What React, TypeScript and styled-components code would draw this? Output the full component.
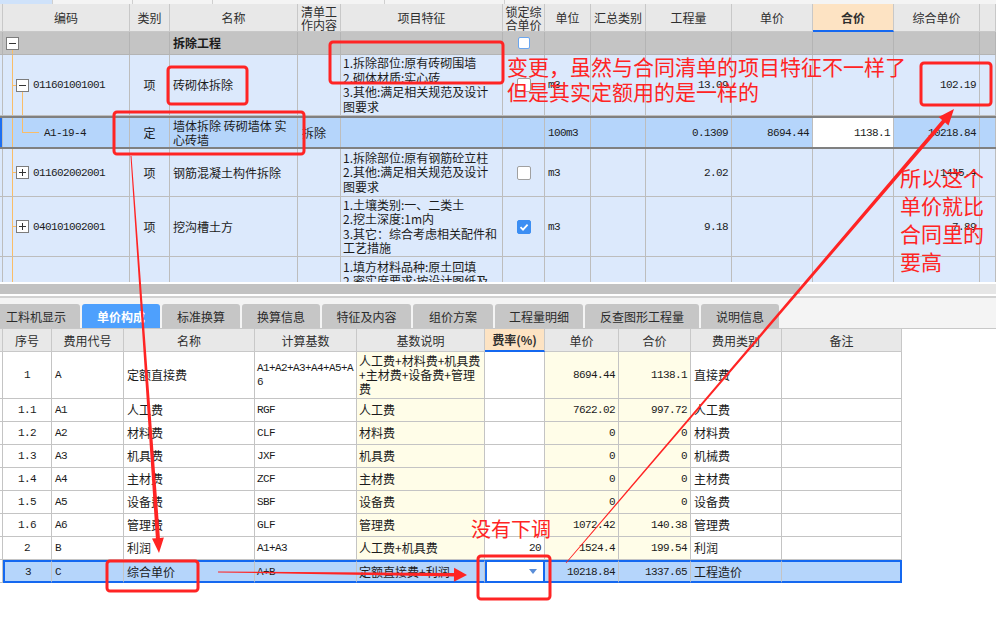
import React from 'react';
import styled, { createGlobalStyle, css } from 'styled-components';

const CN = `'Noto Sans CJK SC', 'Liberation Sans', sans-serif`;
const MONO = `'Liberation Mono', 'Noto Sans CJK SC', monospace`;
const RED = '#ff2424';
const ORANGE = '#f9bd68';
const ROW_BG = '#dce9fc';
const SEL_ROW = '#b5d5fb';
const SEL_BLUE = '#1468f0';
const YELLOW = '#fffde8';

const TOP_COLS = '3px 127px 40px 128px 43px 162px 42px 46px 55px 86px 81px 81px 86px 16px';
const LOW_COLS = '3px 49px 72px 131px 102px 128px 60px 74px 72px 91px 120px';

type Align = 'left' | 'center' | 'right';
const JUSTIFY: Record<Align, string> = { left: 'flex-start', center: 'center', right: 'flex-end' };

const GlobalStyle = createGlobalStyle`
  html, body { margin: 0; padding: 0; background: #ffffff; }
  body { font-family: ${CN}; font-size: 12px; color: #1b1b1b; }
  * { box-sizing: border-box; }
`;

const Page = styled.div`
  position: relative;
  width: 996px;
  height: 627px;
  overflow: hidden;
  background: #fff;
`;

const TopPane = styled.div`
  height: 282px;
  overflow: hidden;
  background: ${ROW_BG};
`;

const TopStrip = styled.div`
  display: flex;
  height: 4px;
  background: #f4f4f4;
`;

const StripCell = styled.div<{ $w: number; $bg?: string }>`
  width: ${p => p.$w}px;
  background: ${p => p.$bg ?? '#f4f4f4'};
  border-right: 1px solid #cfcfcf;
`;

const Row = styled.div<{ $cols: string; $h: number; $bg?: string; $sel?: boolean }>`
  display: grid;
  grid-template-columns: ${p => p.$cols};
  height: ${p => p.$h}px;
  background: ${p => p.$bg ?? 'transparent'};
  ${p =>
    p.$sel &&
    css`
      border-top: 2px solid #808080;
      border-bottom: 2px solid #808080;
      & > div {
        border-bottom: none;
      }
    `}
`;

const Cell = styled.div<{
  $align?: Align;
  $mono?: boolean;
  $bg?: string;
  $line?: string;
  $wrap?: boolean;
  $pad?: number;
  $bold?: boolean;
  $sel?: boolean;
  $edgeL?: boolean;
  $edgeR?: boolean;
}>`
  min-width: 0;
  display: flex;
  align-items: center;
  justify-content: ${p => JUSTIFY[p.$align ?? 'left']};
  padding: 0 ${p => p.$pad ?? 3}px;
  background: ${p => p.$bg ?? 'transparent'};
  border-right: 1px solid ${p => p.$line ?? '#bdbdbd'};
  border-bottom: 1px solid ${p => p.$line ?? '#bdbdbd'};
  overflow: hidden;
  white-space: ${p => (p.$wrap ? 'pre-line' : 'nowrap')};
  word-break: break-all;
  font-family: ${p => (p.$mono ? MONO : CN)};
  font-size: ${p => (p.$mono ? 11 : 12)}px;
  letter-spacing: ${p => (p.$mono ? '-0.6px' : 'normal')};
  font-weight: ${p => (p.$bold ? 700 : 400)};
  line-height: 14px;
  color: #1b1b1b;
  ${p =>
    p.$sel &&
    css`
      border-top: 2px solid ${SEL_BLUE};
      border-bottom: 2px solid ${SEL_BLUE};
    `}
  ${p => p.$edgeL && css`border-left: 2px solid ${SEL_BLUE};`}
  ${p => p.$edgeR && css`border-right: 2px solid ${SEL_BLUE};`}
`;

const HeadCell = styled(Cell)<{ $hot?: boolean }>`
  justify-content: center;
  text-align: center;
  line-height: 13px;
  color: #2e2e2e;
  background: ${p => (p.$hot ? '#fde3c3' : '#e8e8e8')};
  border-right-color: #c8c8c8;
  border-bottom: ${p => (p.$hot ? `2px solid ${SEL_BLUE}` : '1px solid #c8c8c8')};
  font-weight: ${p => (p.$hot ? 700 : 400)};
`;

const Features = styled.div`
  font-size: 12px;
  line-height: 14.5px;
  white-space: pre-line;
`;

const CodeText = styled.span`
  font-family: ${MONO};
`;

const Box = styled.span<{ $variant: 'blue' | 'plain' | 'checked' }>`
  display: inline-flex;
  align-items: center;
  justify-content: center;
  width: ${p => (p.$variant === 'blue' ? 12 : 14)}px;
  height: ${p => (p.$variant === 'blue' ? 12 : 14)}px;
  border-radius: 2px;
  border: 1px solid
    ${p => (p.$variant === 'blue' ? '#6aa6f0' : p.$variant === 'checked' ? '#3c8ef3' : '#a0a0a0')};
  background: ${p => (p.$variant === 'checked' ? '#3c8ef3' : '#fff')};
`;

const ScrollArea = styled.div`
  height: 14px;
  padding: 2px 0;
  background: #fff;
`;

const ScrollTrack = styled.div`
  display: flex;
  height: 10px;
  background: #e6e6e6;
`;

const ScrollThumb = styled.div`
  width: 800px;
  background: #c2c2c2;
`;

const Divider = styled.div`
  height: 2px;
  background: #d2d2d2;
`;

const TabBar = styled.div`
  display: flex;
  gap: 2px;
  height: 31px;
  padding-top: 6px;
  background: #f4f4f4;
  border-bottom: 1px solid #c8c8c8;
`;

const Tab = styled.div<{ $w: number; $active?: boolean; $shift?: number }>`
  flex: none;
  width: ${p => p.$w}px;
  margin-left: ${p => p.$shift ?? 0}px;
  display: flex;
  align-items: center;
  justify-content: center;
  border-radius: 3px 3px 0 0;
  background: ${p => (p.$active ? '#4ea0fd' : '#c6c6c6')};
  color: ${p => (p.$active ? '#fff' : '#2b2b2b')};
  font-weight: ${p => (p.$active ? 700 : 400)};
  font-size: 12px;
`;

const Caret = styled.span`
  width: 0;
  height: 0;
  border-left: 4px solid transparent;
  border-right: 4px solid transparent;
  border-top: 5px solid #5a8ed8;
  margin-right: 3px;
`;

const Overlay = styled.svg`
  position: absolute;
  left: 0;
  top: 0;
  pointer-events: none;
`;

const Note = styled.div<{ $x: number; $y: number; $size: number; $lh: number }>`
  position: absolute;
  left: ${p => p.$x}px;
  top: ${p => p.$y}px;
  font-family: ${CN};
  font-size: ${p => p.$size}px;
  line-height: ${p => p.$lh}px;
  color: ${RED};
  white-space: pre;
  pointer-events: none;
`;

type TreeKind = 'group' | 'open' | 'child' | 'closed' | 'none';

function ExpandBox({ x, cy, plus }: { x: number; cy: number; plus?: boolean }) {
  return (
    <g>
      <rect x={x + 0.5} y={cy - 5.5} width={12} height={12} fill="#fff" stroke="#7c7c7c" />
      <line x1={x + 3} y1={cy + 0.5} x2={x + 10} y2={cy + 0.5} stroke="#333" />
      {plus && <line x1={x + 6.5} y1={cy - 3} x2={x + 6.5} y2={cy + 4} stroke="#333" />}
    </g>
  );
}

function Tree({ kind, h }: { kind: TreeKind; h: number }) {
  const cy = Math.floor(h / 2);
  const w = kind === 'child' ? 41 : 30;
  return (
    <svg width={w} height={h} style={{ flex: 'none' }}>
      {kind === 'group' ? (
        <line x1={9.5} y1={cy + 7} x2={9.5} y2={h} stroke={ORANGE} />
      ) : (
        <line x1={9.5} y1={0} x2={9.5} y2={h} stroke={ORANGE} />
      )}
      {kind === 'group' && <ExpandBox x={3} cy={cy} />}
      {(kind === 'open' || kind === 'closed') && (
        <line x1={9.5} y1={cy + 0.5} x2={13} y2={cy + 0.5} stroke={ORANGE} />
      )}
      {kind === 'open' && (
        <>
          <line x1={19.5} y1={cy + 7} x2={19.5} y2={h} stroke={ORANGE} />
          <ExpandBox x={13} cy={cy} />
        </>
      )}
      {kind === 'closed' && <ExpandBox x={13} cy={cy} plus />}
      {kind === 'child' && (
        <>
          <line x1={19.5} y1={0} x2={19.5} y2={cy + 1} stroke={ORANGE} />
          <line x1={19.5} y1={cy + 0.5} x2={36} y2={cy + 0.5} stroke={ORANGE} />
        </>
      )}
    </svg>
  );
}

function Check({ variant }: { variant: 'blue' | 'plain' | 'checked' }) {
  return (
    <Box $variant={variant}>
      {variant === 'checked' && (
        <svg width="10" height="10" viewBox="0 0 10 10">
          <polyline points="1.5,5.2 4,7.6 8.6,2.6" fill="none" stroke="#fff" strokeWidth="1.8" />
        </svg>
      )}
    </Box>
  );
}

interface TopRowData {
  tree: TreeKind;
  h: number;
  sel?: boolean;
  code: string;
  type: string;
  name: string;
  work?: string;
  feat: string[];
  check?: 'plain' | 'checked';
  unit: string;
  qty: string;
  price?: string;
  total?: string;
  unitPrice: string;
}

const topRows: TopRowData[] = [
  {
    tree: 'open', h: 61, code: '011601001001', type: '项', name: '砖砌体拆除',
    feat: ['1.拆除部位:原有砖砌围墙', '2.砌体材质:实心砖', '3.其他:满足相关规范及设计', '图要求'],
    check: 'plain', unit: 'm3', qty: '13.09', unitPrice: '102.19',
  },
  {
    tree: 'child', h: 33, sel: true, code: 'A1-19-4', type: '定', name: '墙体拆除 砖砌墙体 实\n心砖墙',
    work: '拆除', feat: [], unit: '100m3', qty: '0.1309', price: '8694.44', total: '1138.1', unitPrice: '10218.84',
  },
  {
    tree: 'closed', h: 48, code: '011602002001', type: '项', name: '钢筋混凝土构件拆除',
    feat: ['1.拆除部位:原有钢筋砼立柱', '2.其他:满足相关规范及设计', '图要求'],
    check: 'plain', unit: 'm3', qty: '2.02', unitPrice: '1445.4',
  },
  {
    tree: 'closed', h: 60, code: '040101002001', type: '项', name: '挖沟槽土方',
    feat: ['1.土壤类别:一、二类土', '2.挖土深度:1m内', '3.其它：综合考虑相关配件和', '工艺措施'],
    check: 'checked', unit: 'm3', qty: '9.18', unitPrice: '7.89',
  },
  {
    tree: 'none', h: 64, code: '', type: '', name: '',
    feat: ['1.填方材料品种:原土回填', '2.密实度要求:按设计图纸及', '规范要求', '3.其他:满足相关规范'],
    unit: '', qty: '', unitPrice: '',
  },
];

interface LowRowData {
  no: string;
  code: string;
  name: string;
  base: string;
  desc: string;
  rate?: string;
  price: string;
  total: string;
  kind: string;
  h?: number;
  sel?: boolean;
}

const lowRows: LowRowData[] = [
  { h: 47, no: '1', code: 'A', name: '定额直接费', base: 'A1+A2+A3+A4+A5+A6', desc: '人工费+材料费+机具费+主材费+设备费+管理费', price: '8694.44', total: '1138.1', kind: '直接费' },
  { no: '1.1', code: 'A1', name: '人工费', base: 'RGF', desc: '人工费', price: '7622.02', total: '997.72', kind: '人工费' },
  { no: '1.2', code: 'A2', name: '材料费', base: 'CLF', desc: '材料费', price: '0', total: '0', kind: '材料费' },
  { no: '1.3', code: 'A3', name: '机具费', base: 'JXF', desc: '机具费', price: '0', total: '0', kind: '机械费' },
  { no: '1.4', code: 'A4', name: '主材费', base: 'ZCF', desc: '主材费', price: '0', total: '0', kind: '主材费' },
  { no: '1.5', code: 'A5', name: '设备费', base: 'SBF', desc: '设备费', price: '0', total: '0', kind: '设备费' },
  { no: '1.6', code: 'A6', name: '管理费', base: 'GLF', desc: '管理费', price: '1072.42', total: '140.38', kind: '管理费' },
  { no: '2', code: 'B', name: '利润', base: 'A1+A3', desc: '人工费+机具费', rate: '20', price: '1524.4', total: '199.54', kind: '利润' },
  { no: '3', code: 'C', name: '综合单价', base: 'A+B', desc: '定额直接费+利润', price: '10218.84', total: '1337.65', kind: '工程造价', sel: true },
];

const tabs: [string, number][] = [
  ['工料机显示', 88],
  ['单价构成', 78],
  ['标准换算', 78],
  ['换算信息', 78],
  ['特征及内容', 89],
  ['组价方案', 80],
  ['工程量明细', 88],
  ['反查图形工程量', 114],
  ['说明信息', 78],
];

function arrow(x0: number, y0: number, x1: number, y1: number, w0: number, w1: number, hl: number, hw: number) {
  const dx = x1 - x0;
  const dy = y1 - y0;
  const len = Math.hypot(dx, dy);
  const ux = dx / len;
  const uy = dy / len;
  const nx = -uy;
  const ny = ux;
  const bx = x1 - ux * hl;
  const by = y1 - uy * hl;
  const pts = [
    [x0 + (nx * w0) / 2, y0 + (ny * w0) / 2],
    [bx + (nx * w1) / 2, by + (ny * w1) / 2],
    [bx + (nx * hw) / 2, by + (ny * hw) / 2],
    [x1, y1],
    [bx - (nx * hw) / 2, by - (ny * hw) / 2],
    [bx - (nx * w1) / 2, by - (ny * w1) / 2],
    [x0 - (nx * w0) / 2, y0 - (ny * w0) / 2],
  ];
  return pts.map(p => `${p[0].toFixed(1)},${p[1].toFixed(1)}`).join(' ');
}

const marks = [
  { x: 168, y: 67, w: 79, h: 37 },
  { x: 330, y: 42, w: 173, h: 41 },
  { x: 114, y: 112, w: 190, h: 42 },
  { x: 921, y: 63, w: 70, h: 42 },
  { x: 107, y: 561, w: 91, h: 30 },
  { x: 478, y: 556, w: 72, h: 43 },
];

function TopRowView({ r }: { r: TopRowData }) {
  const inner = r.sel ? r.h - 4 : r.h - 1;
  return (
    <Row $cols={TOP_COLS} $h={r.h} $bg={r.sel ? SEL_ROW : ROW_BG} $sel={r.sel}>
      <Cell $pad={0} $bg={r.sel ? '#1e6ff0' : undefined} />
      <Cell $pad={0} $mono>
        <Tree kind={r.tree} h={inner} />
        <CodeText>{r.code}</CodeText>
      </Cell>
      <Cell $align="center">{r.type}</Cell>
      <Cell $wrap>{r.name}</Cell>
      <Cell $pad={4}>{r.work}</Cell>
      <Cell $pad={2}>
        <Features>{r.feat.join('\n')}</Features>
      </Cell>
      <Cell $align="center">{r.check && <Check variant={r.check} />}</Cell>
      <Cell $mono>{r.unit}</Cell>
      <Cell />
      <Cell $mono $align="right">{r.qty}</Cell>
      <Cell $mono $align="right">{r.price}</Cell>
      <Cell $mono $align="right" $bg={r.sel ? '#fff' : undefined}>{r.total}</Cell>
      <Cell $mono $align="right">{r.unitPrice}</Cell>
      <Cell />
    </Row>
  );
}

function LowRowView({ r }: { r: LowRowData }) {
  const sel = !!r.sel;
  const bg = (yellow: boolean) => (sel ? SEL_ROW : yellow ? YELLOW : '#fff');
  return (
    <Row $cols={LOW_COLS} $h={r.h ?? 23}>
      <Cell $pad={0} $bg="#fff" $line="#c4c4c4" />
      <Cell $align="center" $mono $sel={sel} $edgeL={sel} $bg={bg(false)} $line="#c4c4c4">{r.no}</Cell>
      <Cell $mono $sel={sel} $bg={bg(false)} $line="#c4c4c4">{r.code}</Cell>
      <Cell $sel={sel} $bg={bg(false)} $line="#c4c4c4">{r.name}</Cell>
      <Cell $mono $wrap $pad={2} $sel={sel} $bg={bg(false)} $line="#c4c4c4">{r.base}</Cell>
      <Cell $wrap $pad={2} $sel={sel} $bg={bg(true)} $line="#c4c4c4">{r.desc}</Cell>
      {sel ? (
        <Cell $align="right" $sel $edgeL $edgeR $bg="#fff" $line="#c4c4c4">
          <Caret />
        </Cell>
      ) : (
        <Cell $align="right" $mono $bg="#fff" $line="#c4c4c4">{r.rate}</Cell>
      )}
      <Cell $align="right" $mono $sel={sel} $bg={bg(true)} $line="#c4c4c4">{r.price}</Cell>
      <Cell $align="right" $mono $sel={sel} $bg={bg(true)} $line="#c4c4c4">{r.total}</Cell>
      <Cell $sel={sel} $bg={bg(false)} $line="#c4c4c4">{r.kind}</Cell>
      <Cell $sel={sel} $edgeR={sel} $bg={bg(false)} $line="#c4c4c4" />
    </Row>
  );
}

const topHeads = ['', '编码', '类别', '名称', '清单工\n作内容', '项目特征', '锁定综\n合单价', '单位', '汇总类别', '工程量', '单价', '合价', '综合单价', ''];
const lowHeads = ['', '序号', '费用代号', '名称', '计算基数', '基数说明', '费率(%)', '单价', '合价', '费用类别', '备注'];

export default function App() {
  return (
    <Page>
      <GlobalStyle />
      <TopPane>
        <TopStrip>
          <StripCell $w={53} $bg="#cfe2fa" />
          <StripCell $w={80} />
          <StripCell $w={80} />
          <StripCell $w={172} />
          <StripCell $w={120} />
        </TopStrip>
        <Row $cols={TOP_COLS} $h={28}>
          {topHeads.map((t, i) => (
            <HeadCell key={i} $wrap $pad={i === 0 ? 0 : 1} $hot={t === '合价'}>
              {t}
            </HeadCell>
          ))}
        </Row>
        <Row $cols={TOP_COLS} $h={23} $bg="#c4c4c4">
          <Cell $pad={0} $line="#b4b4b4" />
          <Cell $pad={0} $line="#b4b4b4">
            <Tree kind="group" h={22} />
          </Cell>
          <Cell $line="#b4b4b4" />
          <Cell $bold $line="#b4b4b4">拆除工程</Cell>
          <Cell $line="#b4b4b4" />
          <Cell $line="#b4b4b4" />
          <Cell $align="center" $line="#b4b4b4">
            <Check variant="blue" />
          </Cell>
          <Cell $line="#b4b4b4" />
          <Cell $line="#b4b4b4" />
          <Cell $line="#b4b4b4" />
          <Cell $line="#b4b4b4" />
          <Cell $line="#b4b4b4" />
          <Cell $line="#b4b4b4" />
          <Cell $line="#b4b4b4" />
        </Row>
        {topRows.map((r, i) => (
          <TopRowView key={i} r={r} />
        ))}
      </TopPane>

      <ScrollArea>
        <ScrollTrack>
          <ScrollThumb />
        </ScrollTrack>
      </ScrollArea>
      <Divider />

      <TabBar>
        {tabs.map(([t, w], i) => (
          <Tab key={t} $w={w} $active={i === 1} $shift={i === 0 ? -8 : 0}>
            {t}
          </Tab>
        ))}
      </TabBar>

      <Row $cols={LOW_COLS} $h={23}>
        {lowHeads.map((t, i) => (
          <HeadCell key={i} $pad={i === 0 ? 0 : 2} $hot={i === 6}>
            {t}
          </HeadCell>
        ))}
      </Row>
      {lowRows.map((r, i) => (
        <LowRowView key={i} r={r} />
      ))}

      <Overlay width={996} height={627} viewBox="0 0 996 627">
        {marks.map((m, i) => (
          <rect key={i} x={m.x} y={m.y} width={m.w} height={m.h} rx={3} fill="none" stroke={RED} strokeWidth={3} />
        ))}
        <polygon points={arrow(131, 156, 159, 553, 1, 4, 15, 12)} fill={RED} />
        <polygon points={arrow(218, 572, 467, 575, 0.8, 3.5, 13, 14)} fill={RED} />
        <polygon points={arrow(566, 563, 954, 109, 0.8, 4, 16, 13)} fill={RED} />
      </Overlay>

      <Note $x={507} $y={54} $size={21} $lh={25}>
        {'变更，虽然与合同清单的项目特征不一样了\n但是其实定额用的是一样的'}
      </Note>
      <Note $x={900} $y={163} $size={21} $lh={28}>
        {'所以这个\n单价就比\n合同里的\n要高'}
      </Note>
      <Note $x={471} $y={516} $size={20} $lh={26}>
        没有下调
      </Note>
    </Page>
  );
}
